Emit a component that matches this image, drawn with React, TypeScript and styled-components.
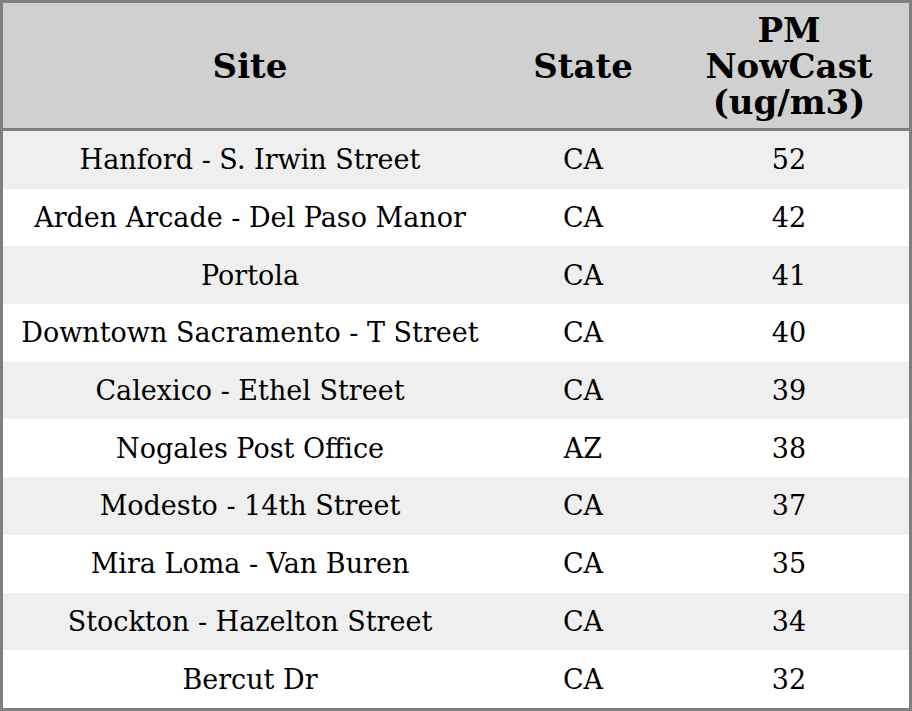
import styled, { createGlobalStyle } from 'styled-components';

const GlobalStyle = createGlobalStyle`
  html, body {
    margin: 0;
    padding: 0;
    background: #ffffff;
  }
`;

const Table = styled.table`
  width: 912px;
  height: 711px;
  border: 3px solid #808080;
  border-collapse: separate;
  border-spacing: 0;
  box-sizing: border-box;
  table-layout: fixed;
  font-family: 'DejaVu Serif', serif;
  color: #000;
`;

const HeadRow = styled.tr`
  height: 128px;
  background: #d0d0d0;
`;

const HeadCell = styled.th<{ $w: number }>`
  box-sizing: border-box;
  width: ${({ $w }) => `${$w}px`};
  padding: 0 4px;
  font-size: 34px;
  font-weight: bold;
  line-height: 36px;
  text-align: center;
  vertical-align: middle;
  border-bottom: 3px solid #808080;
`;

const HeadLine = styled.span`
  display: block;
`;

const Row = styled.tr<{ $shade: boolean }>`
  background: ${({ $shade }) => ($shade ? '#efefef' : '#ffffff')};
`;

const Cell = styled.td`
  padding: 0 4px;
  font-size: 27px;
  text-align: center;
  vertical-align: middle;
  white-space: nowrap;
`;

const rows: [string, string, number][] = [
  ['Hanford - S. Irwin Street', 'CA', 52],
  ['Arden Arcade - Del Paso Manor', 'CA', 42],
  ['Portola', 'CA', 41],
  ['Downtown Sacramento - T Street', 'CA', 40],
  ['Calexico - Ethel Street', 'CA', 39],
  ['Nogales Post Office', 'AZ', 38],
  ['Modesto - 14th Street', 'CA', 37],
  ['Mira Loma - Van Buren', 'CA', 35],
  ['Stockton - Hazelton Street', 'CA', 34],
  ['Bercut Dr', 'CA', 32],
];

export default function App() {
  return (
    <>
      <GlobalStyle />
      <Table>
        <thead>
          <HeadRow>
            <HeadCell $w={494}>Site</HeadCell>
            <HeadCell $w={172}>State</HeadCell>
            <HeadCell $w={240}>
              <HeadLine>PM</HeadLine>
              <HeadLine>NowCast</HeadLine>
              <HeadLine>(ug/m3)</HeadLine>
            </HeadCell>
          </HeadRow>
        </thead>
        <tbody>
          {rows.map(([site, state, value], i) => (
            <Row key={site} $shade={i % 2 === 0}>
              <Cell>{site}</Cell>
              <Cell>{state}</Cell>
              <Cell>{value}</Cell>
            </Row>
          ))}
        </tbody>
      </Table>
    </>
  );
}
